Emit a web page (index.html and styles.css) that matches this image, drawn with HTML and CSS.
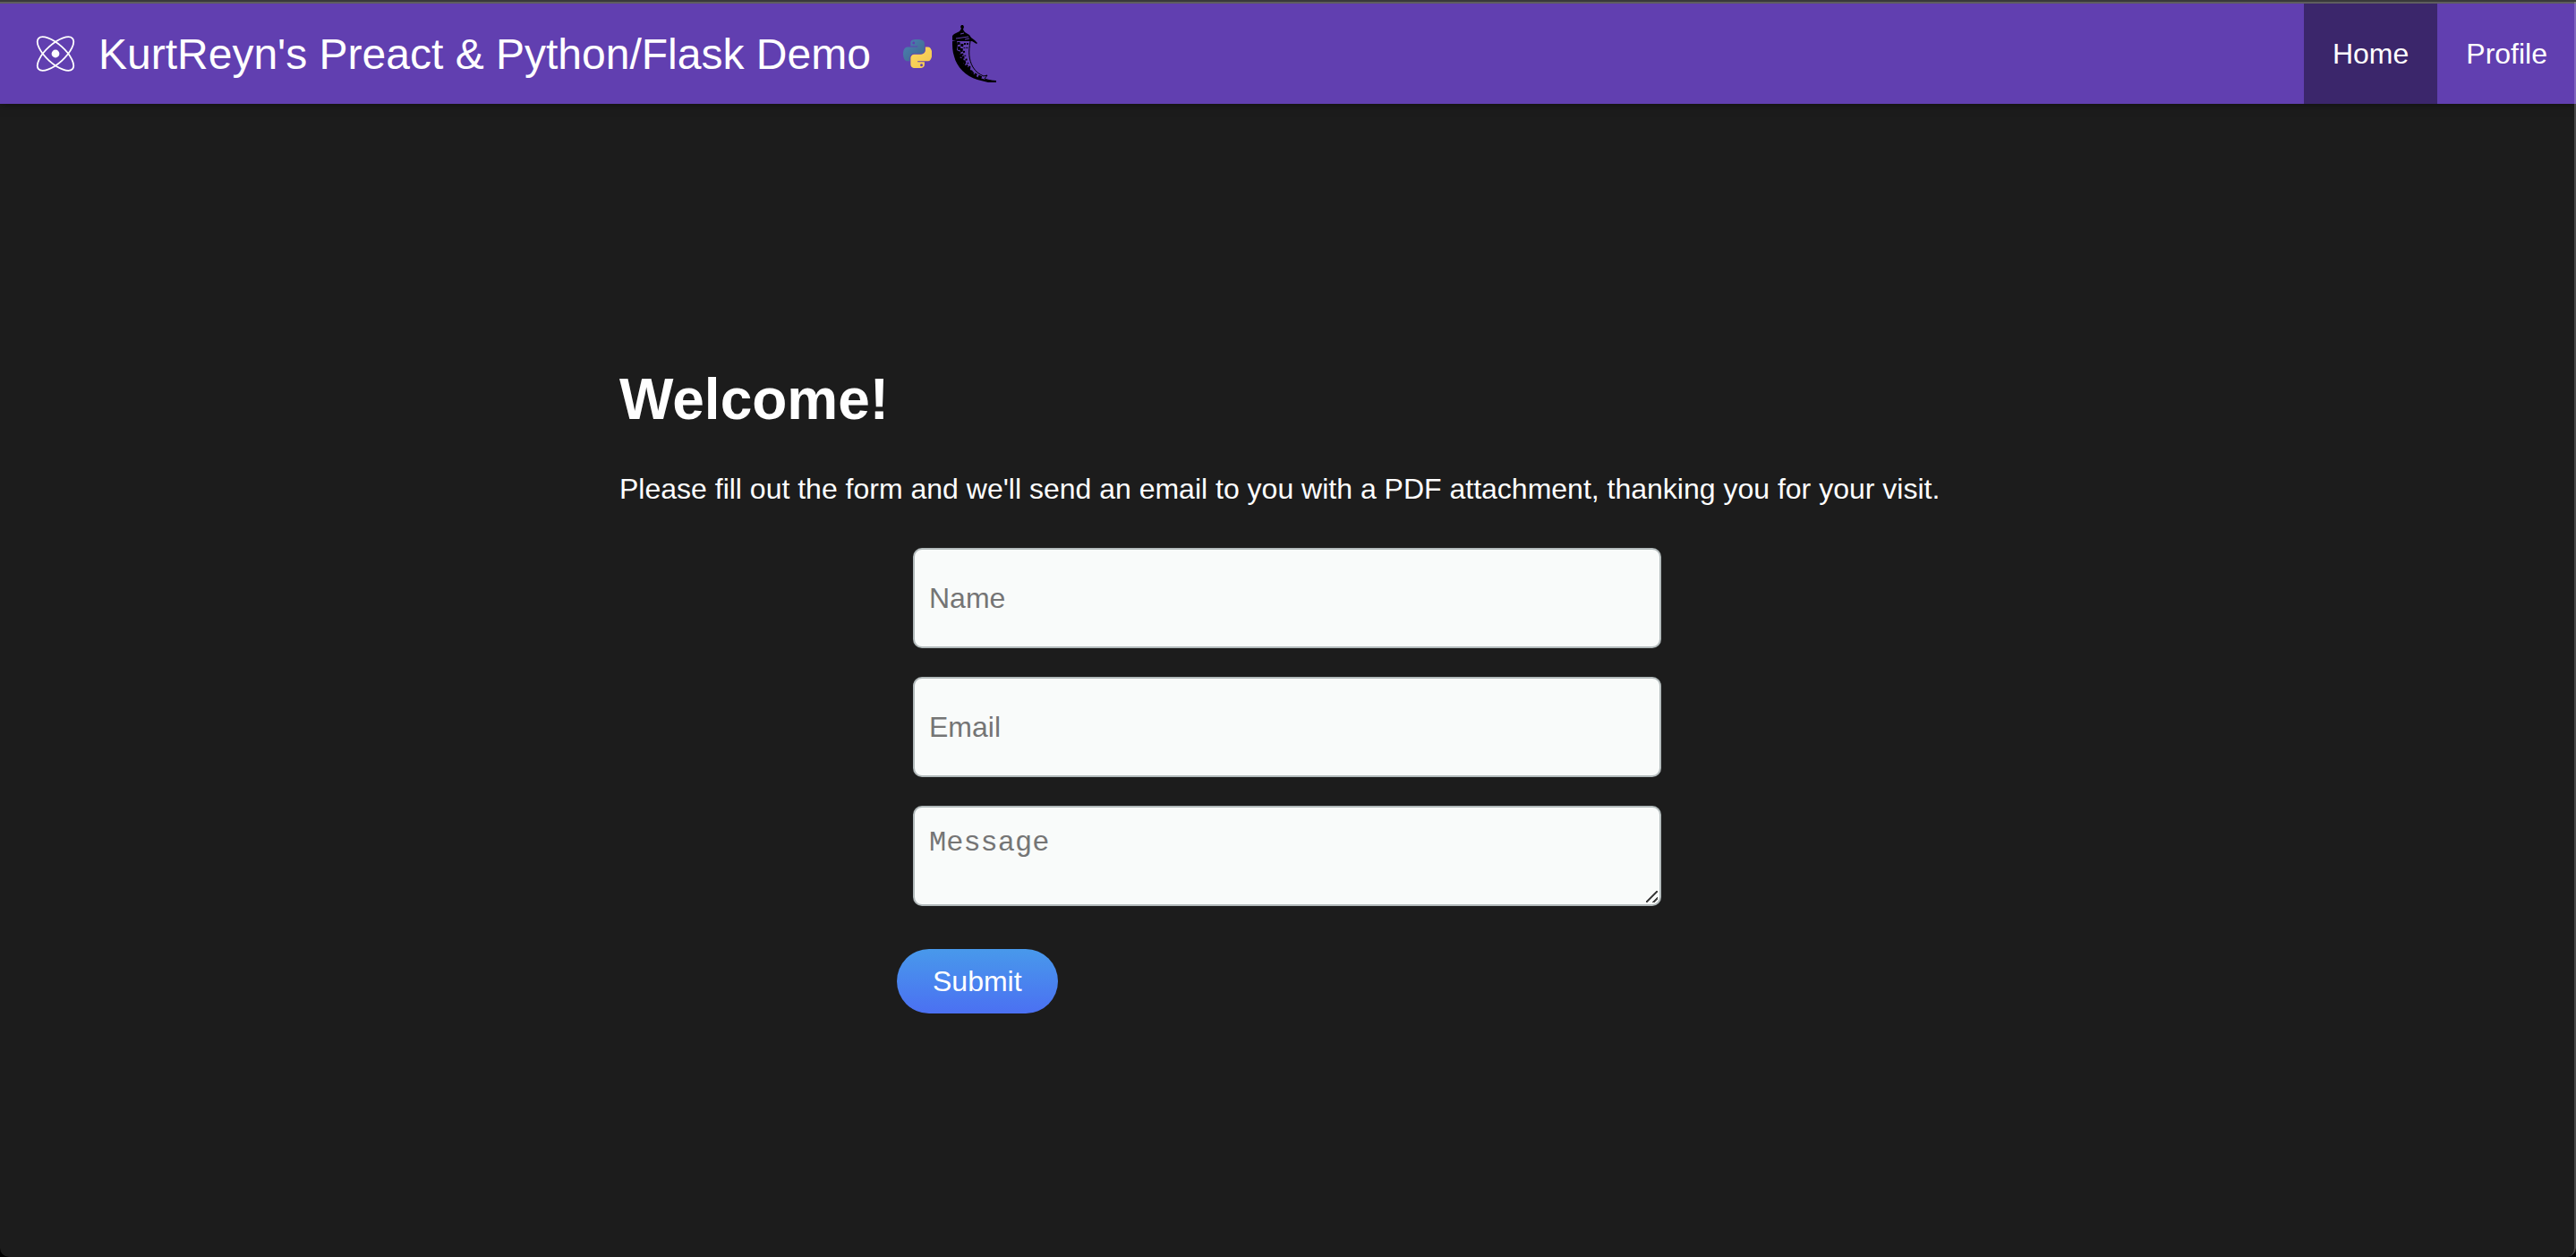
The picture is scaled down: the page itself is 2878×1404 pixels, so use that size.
FILE: index.html
```html
<!DOCTYPE html>
<html lang="en">
<head>
<meta charset="utf-8">
<meta name="viewport" content="width=device-width, initial-scale=1">
<title>KurtReyn's Preact &amp; Python/Flask Demo</title>
<link rel="stylesheet" href="styles.css">
</head>
<body>
<div class="app">
  <header class="header">
    <a class="brand" href="#">
      <svg class="icon-preact" viewBox="0 0 44 40" aria-hidden="true">
        <g fill="none" stroke="#fff" stroke-width="1.8">
          <ellipse cx="22" cy="20" rx="25.500" ry="10.500" transform="rotate(42 22 20)"/>
          <ellipse cx="22" cy="20" rx="25.500" ry="10.500" transform="rotate(-42 22 20)"/>
        </g>
        <circle cx="22" cy="20" r="4.4" fill="#fff"/>
      </svg>
      <span class="title">KurtReyn's Preact &amp; Python/Flask Demo</span>
    </a>
    <svg class="icon-python" viewBox="0 0 110 110" aria-hidden="true">
      <defs>
        <linearGradient id="blue" x1="0" y1="0" x2="1" y2="1"><stop offset="0" stop-color="#4b83b4"/><stop offset="1" stop-color="#40658c"/></linearGradient>
        <linearGradient id="gold" x1="0" y1="0" x2="1" y2="1"><stop offset="0" stop-color="#ffd95a"/><stop offset="1" stop-color="#f0c654"/></linearGradient>
      </defs>
      <path fill="url(#blue)" d="M54.9.1c-4.6 0-9 .4-12.8 1.1C30.8 3.200 28.700 7.400 28.700 15.200v10.300h26.800v3.400H18.700c-7.800 0-14.600 4.700-16.700 13.600-2.500 10.200-2.600 16.600 0 27.200 1.900 7.900 6.500 13.600 14.200 13.600h9.200V71.100c0-8.800 7.700-16.600 16.700-16.600h26.700c7.400 0 13.400-6.100 13.400-13.600V15.200c0-7.200-6.100-12.700-13.400-13.900C64.200.4 59.500.1 54.900.1zM40.400 8.400c2.800 0 5 2.300 5 5.100s-2.200 5.100-5 5.100-5-2.300-5-5.100 2.200-5.100 5-5.100z"/>
      <path fill="url(#gold)" d="M85.600 28.900v11.900c0 9.200-7.800 17-16.700 17H42.200c-7.300 0-13.400 6.200-13.400 13.500v25.500c0 7.300 6.300 11.500 13.400 13.600 8.500 2.500 16.600 3 26.700 0 6.700-2 13.400-5.900 13.400-13.600V86.500H55.600v-3.400h40.100c7.800 0 10.700-5.400 13.400-13.500 2.800-8.400 2.700-16.500 0-27.200-1.900-7.700-5.600-13.600-13.400-13.600zM70.600 93.500c2.800 0 5 2.300 5 5.100s-2.200 5.100-5 5.100-5-2.300-5-5.100 2.200-5.100 5-5.100z"/>
    </svg>
    <svg class="icon-flask" viewBox="0 0 50 66" aria-hidden="true">
      <path d="M11 1h2l1 2-1 3 2 3 5 3 2 3 4 3 3 3-1 1-5-3H5l-4-1v-5l2-2 6-3 2-3-1-2z"/>
      <path d="M5 16l14-2M10 11l4-1M15 17l5-1" fill="none" stroke="#613fb0" stroke-width="1"/>
      <path d="M1 19h5l1 4-1 6 4 2-1 6 4 2 0 5 5 4 1 4 6 4 4 3 9 3 12 1v2l-9 0-12-3C16 58 6 48 3 36 1 30 1 25 1 19z"/>
      <path d="M21 19c-2 12-2 20 3 29 3 5 7 8 12 10l4-1-3 4 10 3" fill="none" stroke="#000" stroke-width="1"/>
      <g fill="none" stroke="#000" stroke-width="3" stroke-dasharray="3 2 4 2 2 1">
        <path d="M8 20l1 12 5 13 8 9 12 6"/>
        <path d="M12 22l-1 9 4 13 8 10"/>
      </g>
      <path d="M15 21l-1 10 3 10 5 10M18 21l-1 8" fill="none" stroke="#000" stroke-width="2" stroke-dasharray="2 3 1 3"/>
    </svg>
    <nav class="nav">
      <a class="nav-link active" href="#" aria-current="page">Home</a>
      <a class="nav-link" href="#profile">Profile</a>
    </nav>
  </header>
  <main class="main">
    <section class="welcome">
      <h1>Welcome!</h1>
      <p>Please fill out the form and we'll send an email to you with a PDF attachment, thanking you for your visit.</p>
      <form class="form">
        <input class="field" type="text" name="name" placeholder="Name" aria-label="Name">
        <input class="field" type="email" name="email" placeholder="Email" aria-label="Email">
        <textarea class="field message" name="message" placeholder="Message" aria-label="Message"></textarea>
        <button class="submit" type="submit">Submit</button>
      </form>
    </section>
  </main>
</div>
</body>
</html>
```
FILE: styles.css
```css
* {
  box-sizing: border-box;
}

html {
  background: #000;
}

body {
  margin: 0;
  color: #fff;
  font: 32px/48px "Liberation Sans", Arial, sans-serif;
}

.app {
  position: relative;
  display: flex;
  flex-direction: column;
  min-height: 100vh;
  background: #1c1c1c;
  border-top: 2px solid #39393b;
  border-radius: 0 0 10px 10px;
  overflow: hidden;
}

/* Translucent window edge, drawn over the page */
.app::after {
  content: "";
  position: absolute;
  inset: 0;
  border-right: 2px solid rgba(255, 255, 255, 0.2);
  border-radius: 0 0 10px 10px;
  pointer-events: none;
}

.header {
  display: flex;
  align-items: center;
  height: 114px;
  padding-left: 40px;
  background: #613fb0;
  border-top: 2px solid #5e5e5e;
  box-shadow: 0 0 10px rgba(0, 0, 0, 0.5);
}

.brand {
  display: flex;
  align-items: center;
  gap: 26px;
  color: inherit;
  text-decoration: none;
}

.icon-preact {
  width: 44px;
  height: 40px;
}

.title {
  padding-top: 2px;
  font-size: 48px;
  line-height: 56px;
}

.icon-python {
  width: 32px;
  height: 32px;
  margin-left: 36px;
}

.icon-flask {
  width: 50px;
  height: 66px;
  margin-left: 22px;
}

.nav {
  display: flex;
  align-self: stretch;
  margin-left: auto;
}

.nav-link {
  display: flex;
  align-items: center;
  padding: 0 32px;
  color: #fff;
  text-decoration: none;
}

.nav-link.active {
  background: #3b266b;
}

.main {
  display: flex;
  flex: 1;
  align-items: center;
  justify-content: center;
  padding: 22px 2px 0 0;
}

.welcome {
  width: 1492px;
  max-width: 100%;
}

h1 {
  margin: 0 0 40px;
  font-size: 64px;
  line-height: 72px;
}

p {
  margin: 0 0 42px;
}

.form {
  display: flex;
  flex-direction: column;
  gap: 32px;
  width: 872px;
  max-width: 100%;
  margin: 0 auto;
}

.field {
  height: 112px;
  margin: 0 18px;
  padding: 16px;
  border: 2px solid #b2babb;
  border-radius: 10px;
  background: #f9fbfa;
  color: #1c1c1c;
  font: 32px/48px "Liberation Sans", Arial, sans-serif;
}

.field::placeholder {
  color: #757575;
}

.message {
  font-family: "Liberation Mono", "Courier New", monospace;
}

.message::-webkit-resizer {
  background: linear-gradient(135deg, transparent 8px, #444 8px, #444 10px, transparent 10px, transparent 14px, #444 14px, #444 16px, transparent 16px) 0 0 / 13px 13px no-repeat;
}

.submit {
  align-self: flex-start;
  height: 72px;
  margin-top: 16px;
  padding: 0 40px;
  border: 0;
  border-radius: 36px;
  background: linear-gradient(#4899eb, #4b70f2);
  color: #fff;
  font: 32px/48px "Liberation Sans", Arial, sans-serif;
}
```
